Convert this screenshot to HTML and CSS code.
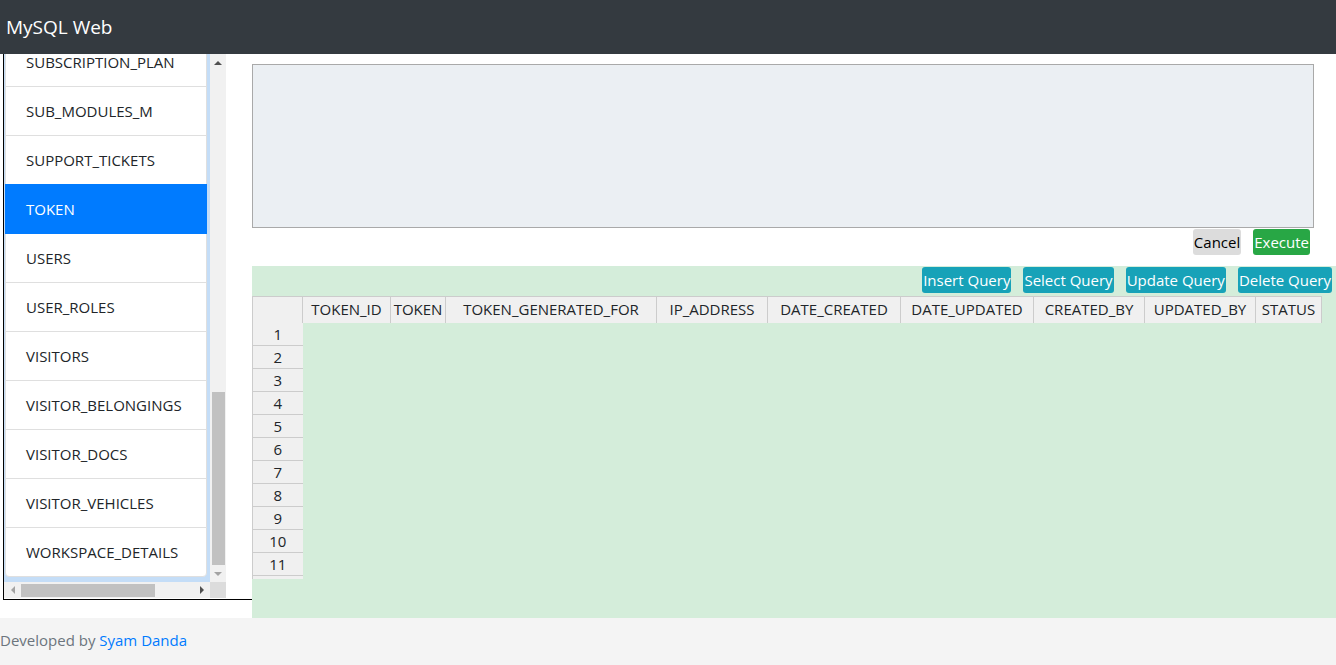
FILE: index.html
```html
<!DOCTYPE html>
<html lang="en">
<head>
<meta charset="utf-8">
<title>MySQL Web</title>
<link rel="stylesheet" href="styles.css">
</head>
<body>
<header class="navbar"><span class="brand">MySQL Web</span></header>
<div class="page">
  <aside class="sidebar">
    <div class="sb-top">
      <div class="sb-view">
        <ul class="list-group">
          <li class="item">SUBSCRIPTION_PLAN</li>
          <li class="item">SUB_MODULES_M</li>
          <li class="item">SUPPORT_TICKETS</li>
          <li class="item active">TOKEN</li>
          <li class="item">USERS</li>
          <li class="item">USER_ROLES</li>
          <li class="item">VISITORS</li>
          <li class="item">VISITOR_BELONGINGS</li>
          <li class="item">VISITOR_DOCS</li>
          <li class="item">VISITOR_VEHICLES</li>
          <li class="item">WORKSPACE_DETAILS</li>
        </ul>
      </div>
      <div class="vscroll">
        <div class="arrow-box"><span class="tri tri-up"></span></div>
        <div class="vtrack"><div class="vthumb"></div></div>
        <div class="arrow-box"><span class="tri tri-down"></span></div>
      </div>
      <div class="sb-fill"></div>
    </div>
    <div class="sb-bottom">
      <div class="hscroll">
        <div class="arrow-box h"><span class="tri tri-left"></span></div>
        <div class="htrack"><div class="hthumb"></div></div>
        <div class="arrow-box h"><span class="tri tri-right"></span></div>
      </div>
      <div class="corner"></div>
      <div class="sb-fill"></div>
    </div>
  </aside>
  <main class="main">
    <textarea class="query"></textarea>
    <div class="actions">
      <button class="btn btn-cancel">Cancel</button>
      <button class="btn btn-exec">Execute</button>
    </div>
    <section class="result">
      <div class="tools">
        <button class="btn btn-info">Insert Query</button>
        <button class="btn btn-info">Select Query</button>
        <button class="btn btn-info">Update Query</button>
        <button class="btn btn-info">Delete Query</button>
      </div>
      <div class="grid-wrap">
        <table class="grid">
          <colgroup>
            <col class="c-rh"><col class="c1"><col class="c2"><col class="c3"><col class="c4"><col class="c5"><col class="c6"><col class="c7"><col class="c8"><col class="c9">
          </colgroup>
          <thead>
            <tr>
              <th class="corner-cell"></th>
              <th>TOKEN_ID</th><th>TOKEN</th><th>TOKEN_GENERATED_FOR</th><th>IP_ADDRESS</th><th>DATE_CREATED</th><th>DATE_UPDATED</th><th>CREATED_BY</th><th>UPDATED_BY</th><th>STATUS</th>
            </tr>
          </thead>
          <tbody>
            <tr><td class="rh">1</td><td colspan="9"></td></tr>
            <tr><td class="rh">2</td><td colspan="9"></td></tr>
            <tr><td class="rh">3</td><td colspan="9"></td></tr>
            <tr><td class="rh">4</td><td colspan="9"></td></tr>
            <tr><td class="rh">5</td><td colspan="9"></td></tr>
            <tr><td class="rh">6</td><td colspan="9"></td></tr>
            <tr><td class="rh">7</td><td colspan="9"></td></tr>
            <tr><td class="rh">8</td><td colspan="9"></td></tr>
            <tr><td class="rh">9</td><td colspan="9"></td></tr>
            <tr><td class="rh">10</td><td colspan="9"></td></tr>
            <tr><td class="rh">11</td><td colspan="9"></td></tr>
            <tr><td class="rh"></td><td colspan="9"></td></tr>
          </tbody>
        </table>
      </div>
    </section>
  </main>
</div>
<footer class="footer">Developed by <a class="author" href="#">Syam Danda</a></footer>
</body>
</html>
```

FILE: styles.css
```css
* { box-sizing: border-box; }
html, body { margin: 0; padding: 0; }
body {
  font-family: "Open Sans", "Noto Sans", sans-serif;
  font-size: 15px;
  color: #212529;
  background: #fff;
  width: 1336px;
  height: 665px;
  overflow: hidden;
}

.navbar {
  height: 54px;
  background: #343a40;
  display: flex;
  align-items: center;
  padding-left: 6px;
}
.brand { color: #fff; font-size: 19px; line-height: 24px; }

.page { display: flex; height: 564px; }

/* sidebar */
.sidebar {
  width: 249px;
  height: 546px;
  margin-left: 3px;
  border-left: 1px solid #000;
  border-bottom: 1px solid #000;
  display: flex;
  flex-direction: column;
}
.sb-top { display: flex; height: 528px; }
.sb-view {
  width: 206px;
  background: #c4ddf7;
  overflow: hidden;
  padding: 0 3px 0 1px;
}
.list-group {
  list-style: none;
  margin: -17px 0 0 0;
  padding: 0;
}
.item {
  height: 50px;
  padding: 0 20px;
  line-height: 48px;
  border: 1px solid #dfdfdf;
  margin-bottom: -1px;
  background: #fff;
  white-space: nowrap;
}
.item:last-child { margin-bottom: 0; border-radius: 0 0 4px 4px; }
.item.active { background: #007bff; border-color: #007bff; color: #fff; position: relative; }

.vscroll { width: 16px; background: #f1f1f1; display: flex; flex-direction: column; }
.arrow-box { height: 17px; display: flex; align-items: center; justify-content: center; }
.arrow-box.h { width: 17px; height: 16px; }
.vtrack { flex: 1; padding-top: 321px; }
.vthumb { width: 13px; height: 173px; margin-left: 2px; background: #c1c1c1; }
.tri { width: 0; height: 0; display: block; }
.tri-up { border-left: 4px solid transparent; border-right: 4px solid transparent; border-bottom: 4px solid #505050; }
.tri-down { border-left: 4px solid transparent; border-right: 4px solid transparent; border-top: 4px solid #a3a3a3; }
.tri-left { border-top: 4px solid transparent; border-bottom: 4px solid transparent; border-right: 4px solid #a3a3a3; }
.tri-right { border-top: 4px solid transparent; border-bottom: 4px solid transparent; border-left: 4px solid #505050; }
.sb-fill { flex: 1; background: #fff; }

.sb-bottom { display: flex; height: 17px; }
.hscroll { width: 206px; height: 16px; background: #f1f1f1; display: flex; }
.htrack { flex: 1; display: flex; align-items: center; }
.hthumb { width: 134px; height: 13px; background: #c1c1c1; }
.corner { width: 16px; height: 16px; background: #dcdcdc; }

/* main */
.main { flex: 1; display: flex; flex-direction: column; padding-top: 10px; }
.query {
  display: block;
  width: 1062px;
  height: 164px;
  margin: 0;
  border: 1px solid #a9a9a9;
  background: #ebeff3;
  resize: none;
  font: inherit;
}
.actions {
  display: flex;
  justify-content: flex-end;
  gap: 12px;
  margin-top: 1px;
  padding-right: 26px;
}
.btn {
  font-family: inherit;
  font-size: 15px;
  height: 26px;
  line-height: 24px;
  padding: 0;
  border: 1px solid transparent;
  border-radius: 3px;
  cursor: pointer;
}
.btn-cancel { background: #dcdcdc; color: #000; }
.btn-exec { background: #28a745; color: #fff; }
.btn-info { background: #17a2b8; color: #fff; }

.result {
  margin-top: 11px;
  height: 352px;
  background: #d4edda;
  padding-top: 1px;
}
.tools {
  display: flex;
  justify-content: flex-end;
  gap: 12px;
  padding-right: 4px;
}
.grid-wrap { margin-top: 3px; height: 283px; overflow: hidden; }
.grid {
  border-collapse: collapse;
  table-layout: fixed;
  width: 1069px;
}
.c-rh { width: 50px; }
.c1 { width: 88px; }
.c2 { width: 55px; }
.c3 { width: 211px; }
.c4 { width: 111px; }
.c5 { width: 133px; }
.c6 { width: 133px; }
.c7 { width: 111px; }
.c8 { width: 111px; }
.c9 { width: 66px; }
.grid th {
  height: 26px;
  padding: 0;
  font-weight: normal;
  background: #f0f0f0;
  border: 1px solid #ccc;
  border-bottom: none;
  text-align: center;
  white-space: nowrap;
  overflow: hidden;
  line-height: 25px;
}
.grid td { height: 23px; padding: 0; line-height: 22px; }
.grid td.rh {
  background: #f0f0f0;
  border-left: 1px solid #ccc;
  border-bottom: 1px solid #ccc;
  text-align: center;
}

.footer {
  height: 47px;
  background: #f4f4f4;
  color: #6c757d;
  line-height: 45px;
}
.author { color: #007bff; text-decoration: none; }
```
